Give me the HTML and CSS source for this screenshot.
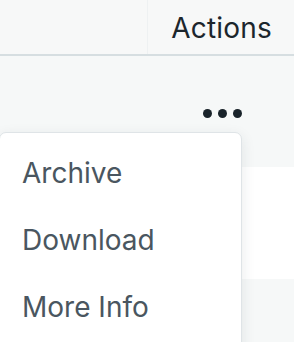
FILE: index.html
```
<!DOCTYPE html>
<html>
<head>
<meta charset="utf-8">
<link rel="stylesheet" href="styles.css">
</head>
<body>
<div class="table">
  <div class="head">
    <div class="hcell first"></div>
    <div class="hcell actions">Actions</div>
  </div>
  <div class="row grey">
    <div class="dots"><span></span><span></span><span></span></div>
  </div>
  <div class="row white"></div>
  <div class="row grey"></div>
  <div class="menu">
    <div class="item">Archive</div>
    <div class="item">Download</div>
    <div class="item">More Info</div>
  </div>
</div>
</body>
</html>
```
FILE: styles.css
```
html, body {
  margin: 0;
  padding: 0;
  background: #ffffff;
  overflow: hidden;
}
.table {
  position: relative;
  width: 294px;
  height: 342px;
  font-family: Inter, "Noto Sans", sans-serif;
  overflow: hidden;
}
.head {
  display: flex;
  height: 54px;
  background: #f7f8f8;
  border-bottom: 2px solid #d6dee1;
}
.hcell {
  display: flex;
  align-items: center;
  justify-content: flex-end;
}
.first {
  width: 147px;
}
.actions {
  flex: 1;
  border-left: 1px solid #eef1f2;
  padding-right: 22px;
  padding-top: 1px;
  font-size: 28px;
  color: #1c262d;
  letter-spacing: 0.2px;
}
.row {
  height: 112px;
  display: flex;
  align-items: center;
  justify-content: flex-end;
}
.row:nth-child(2) { height: 111px; }
.grey { background: #f6f8f8; }
.white { background: #ffffff; }
.dots {
  display: flex;
  gap: 6px;
  padding-right: 52px;
  padding-top: 3px;
}
.dots span {
  width: 9px;
  height: 9px;
  border-radius: 50%;
  background: #19232a;
}
.menu {
  position: absolute;
  left: -1px;
  top: 132px;
  width: 243px;
  height: 260px;
  background: #ffffff;
  border: 1px solid #dfe4e7;
  border-radius: 7px;
  box-shadow: 0 4px 14px rgba(30, 45, 55, 0.10);
  padding-top: 7px;
  box-sizing: border-box;
}
.item {
  height: 67px;
  line-height: 67px;
  padding-left: 22px;
  font-size: 28px;
  color: #4a5660;
}
```
